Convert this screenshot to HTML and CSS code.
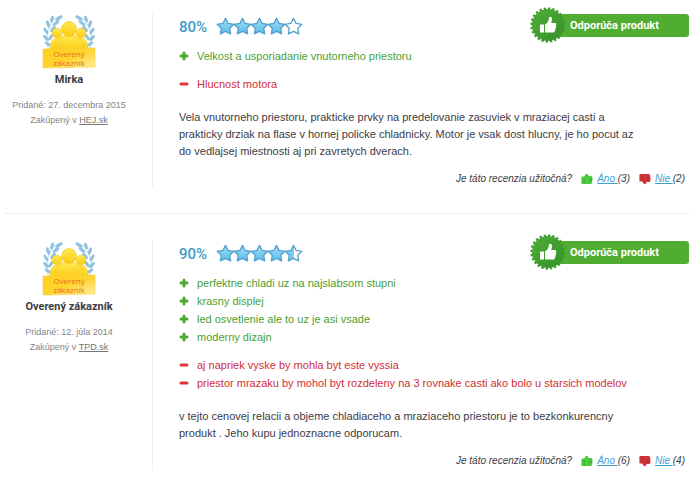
FILE: index.html
```html
<!DOCTYPE html>
<html lang="sk">
<head>
<meta charset="utf-8">
<title>Recenzie zákazníkov</title>
<link rel="stylesheet" href="styles.css">
</head>
<body>
<svg class="sprite" aria-hidden="true">
  <defs>
    <linearGradient id="gold" x1="0" y1="0" x2="0" y2="1">
      <stop offset="0" stop-color="#ffea50"/><stop offset="1" stop-color="#fbca14"/>
    </linearGradient>
    <linearGradient id="plate" x1="0" y1="0" x2="1" y2="1">
      <stop offset="0" stop-color="#ffcf1c"/><stop offset=".5" stop-color="#ffd42e"/><stop offset="1" stop-color="#fff0a0"/>
    </linearGradient>
    <linearGradient id="sky" x1="0" y1="0" x2="0" y2="1">
      <stop offset="0" stop-color="#a4ddf7"/><stop offset="1" stop-color="#58bdeb"/>
    </linearGradient>
    <linearGradient id="half" x1="0" y1="0" x2="1" y2="0">
      <stop offset=".5" stop-color="#7accf0"/><stop offset=".5" stop-color="#fff"/>
    </linearGradient>
    <linearGradient id="seal" x1="0" y1="0" x2="1" y2="1">
      <stop offset="0" stop-color="#4dae38"/><stop offset="1" stop-color="#35902a"/>
    </linearGradient>
    <path id="star-shape" d="M9 1.3 11.5 6.100 16.900 6.900 13 10.700 13.900 16 9 13.600 4.100 16 5 10.700 1.100 6.900 6.500 6.100Z" stroke="#4f9fcc" stroke-width="1.200" stroke-linejoin="round"/>
    <g id="laurel">
      <path d="M9 40C1 31 2 16 12 4" fill="none" stroke="#b5d9ea" stroke-width="1"/>
      <g fill="#8fc3e0">
        <ellipse cx="16" cy="4" rx="4.200" ry="1.700" transform="rotate(-32 16 4)"/>
        <ellipse cx="9" cy="5" rx="3.600" ry="1.600" transform="rotate(-75 9 5)"/>
        <ellipse cx="13" cy="9" rx="4" ry="1.700" transform="rotate(-38 13 9)"/>
        <ellipse cx="5" cy="10" rx="3.800" ry="1.700" transform="rotate(72 5 10)"/>
        <ellipse cx="10" cy="15" rx="3.800" ry="1.700" transform="rotate(-48 10 15)"/>
        <ellipse cx="3" cy="17" rx="3.800" ry="1.600" transform="rotate(58 3 17)"/>
        <ellipse cx="8" cy="23" rx="3.800" ry="1.600" transform="rotate(-55 8 23)"/>
        <ellipse cx="3" cy="24" rx="3.800" ry="1.600" transform="rotate(45 3 24)"/>
        <ellipse cx="5" cy="30" rx="3.800" ry="1.500" transform="rotate(32 5 30)"/>
      </g>
    </g>
    <g id="person"><circle r="4.800"/><path d="M-7 18C-7 8-4 5 0 5S7 8 7 18Z"/></g>
  </defs>
  <symbol id="verified" viewBox="0 0 54 56">
    <use href="#laurel" x="1" y="1"/>
    <use href="#laurel" transform="translate(53 1) scale(-1 1)"/>
    <g fill="url(#gold)" stroke="#f3c21a" stroke-width=".6">
      <use href="#person" x="15" y="20"/>
      <use href="#person" x="39" y="20"/>
      <path d="M12 38C12 27 17 22 27 22S42 27 42 38Z"/>
      <circle cx="27" cy="16" r="7.500"/>
    </g>
    <path d="M1 36 53 35 53 54 1 55Z" fill="url(#plate)" stroke="#f8cf3c" stroke-width=".6"/>
  </symbol>
  <symbol id="star" viewBox="0 0 18 18"><use href="#star-shape" fill="url(#sky)"/></symbol>
  <symbol id="star-half" viewBox="0 0 18 18"><use href="#star-shape" fill="url(#half)"/></symbol>
  <symbol id="star-empty" viewBox="0 0 18 18"><use href="#star-shape" fill="#fff"/></symbol>
  <symbol id="plus" viewBox="0 0 10 10"><path d="M5 2V8M2 5H8" stroke="#49ad33" stroke-width="3" stroke-linecap="round"/></symbol>
  <symbol id="minus" viewBox="0 0 10 10"><path d="M2 5H8" stroke="#e2333c" stroke-width="3" stroke-linecap="round"/></symbol>
  <symbol id="seal-thumb" viewBox="0 0 36 36">
    <circle cx="18" cy="18" r="16.500" fill="none" stroke="#3f9d2e" stroke-width="2.400" pathLength="96" stroke-dasharray="2.200 1.800"/>
    <circle cx="18" cy="18" r="16" fill="url(#seal)"/>
    <path d="M10 17.500H14V25.500H10ZM15 17.500C18 15.500 19 13 19 10.500 19.500 9.200 22 9.700 22 12 22 14 21.500 15 21 16H25C26.600 16 26.600 18.300 25.600 18.700 26.600 19.500 26.300 21 25.200 21.400 25.900 22.300 25.400 23.500 24.600 23.800 25 24.900 24.300 25.500 23.300 25.500H15Z" fill="#fff"/>
  </symbol>
  <symbol id="thumb" viewBox="0 0 12 12"><path d="M1 3.500H3L5 1Q7 0 7.500 3H10.500Q11.700 3.500 11.500 6L11 10Q10.500 11 9.500 11H1.200Q.4 11 .4 10V4.500Q.4 3.500 1 3.500Z"/><path d="M3.200 5V10.500M8 6H11M8 8H11" fill="none" stroke="#000" stroke-opacity=".15"/></symbol>
</svg>

<main class="reviews">
  <article class="review">
    <aside class="author">
      <div class="verified"><svg aria-hidden="true"><use href="#verified"/></svg><span>Overený<br>zákazník</span></div>
      <h2 class="name">Mirka</h2>
      <p class="meta">Pridané: 27. decembra 2015<br>Zakúpený v <a href="#hej">HEJ.sk</a></p>
    </aside>
    <div class="content">
      <header class="head">
        <strong class="score">80%</strong>
        <span class="stars" role="img" aria-label="4 z 5">
          <svg><use href="#star"/></svg><svg><use href="#star"/></svg><svg><use href="#star"/></svg><svg><use href="#star"/></svg><svg><use href="#star-empty"/></svg>
        </span>
        <div class="recommend"><svg><use href="#seal-thumb"/></svg><span>Odporúča produkt</span></div>
      </header>
      <ul class="points pros">
        <li><svg><use href="#plus"/></svg>Velkost a usporiadanie vnutorneho priestoru</li>
      </ul>
      <ul class="points cons">
        <li><svg><use href="#minus"/></svg>Hlucnost motora</li>
      </ul>
      <p class="text">Vela vnutorneho priestoru, prakticke prvky na predelovanie zasuviek v mraziacej casti a prakticky drziak na flase v hornej policke chladnicky. Motor je vsak dost hlucny, je ho pocut az do vedlajsej miestnosti aj pri zavretych dverach.</p>
      <footer class="useful">
        <span>Je táto recenzia užitočná?</span>
        <span class="vote yes"><svg><use href="#thumb"/></svg><span><a href="#yes">Áno </a>(3)</span></span>
        <span class="vote no"><svg><use href="#thumb"/></svg><span><a href="#no">Nie </a>(2)</span></span>
      </footer>
    </div>
  </article>

  <article class="review">
    <aside class="author">
      <div class="verified"><svg aria-hidden="true"><use href="#verified"/></svg><span>Overený<br>zákazník</span></div>
      <h2 class="name">Overený zákazník</h2>
      <p class="meta">Pridané: 12. júla 2014<br>Zakúpený v <a href="#tpd">TPD.sk</a></p>
    </aside>
    <div class="content">
      <header class="head">
        <strong class="score">90%</strong>
        <span class="stars" role="img" aria-label="4,5 z 5">
          <svg><use href="#star"/></svg><svg><use href="#star"/></svg><svg><use href="#star"/></svg><svg><use href="#star"/></svg><svg><use href="#star-half"/></svg>
        </span>
        <div class="recommend"><svg><use href="#seal-thumb"/></svg><span>Odporúča produkt</span></div>
      </header>
      <ul class="points pros">
        <li><svg><use href="#plus"/></svg>perfektne chladi uz na najslabsom stupni</li>
        <li><svg><use href="#plus"/></svg>krasny displej</li>
        <li><svg><use href="#plus"/></svg>led osvetlenie ale to uz je asi vsade</li>
        <li><svg><use href="#plus"/></svg>moderny dizajn</li>
      </ul>
      <ul class="points cons">
        <li><svg><use href="#minus"/></svg>aj napriek vyske by mohla byt este vyssia</li>
        <li><svg><use href="#minus"/></svg>priestor mrazaku by mohol byt rozdeleny na 3 rovnake casti ako bolo u starsich modelov</li>
      </ul>
      <p class="text">v tejto cenovej relacii a objeme chladiaceho a mraziaceho priestoru je to bezkonkurencny produkt . Jeho kupu jednoznacne odporucam.</p>
      <footer class="useful">
        <span>Je táto recenzia užitočná?</span>
        <span class="vote yes"><svg><use href="#thumb"/></svg><span><a href="#yes">Áno </a>(6)</span></span>
        <span class="vote no"><svg><use href="#thumb"/></svg><span><a href="#no">Nie </a>(4)</span></span>
      </footer>
    </div>
  </article>
</main>
</body>
</html>
```
FILE: styles.css
```css
* { box-sizing: border-box; }
body {
  margin: 0;
  background: #fff;
  color: #3c3c44;
  font: 11px/17px "Liberation Sans", Arial, sans-serif;
}
h2, p, ul { margin: 0; padding: 0; }
svg { display: block; flex: none; }
.sprite { position: absolute; width: 0; height: 0; }

.reviews { padding: 0 10px 0 4px; }
.review {
  display: grid;
  grid-template-columns: 148px 1fr;
  padding: 13px 0 25px;
}
.review + .review { border-top: 1px solid #eee; padding-top: 26px; }

.author {
  display: flex;
  flex-direction: column;
  align-items: center;
  padding-right: 18px;
  text-align: center;
}
.verified { position: relative; margin-bottom: 2px; }
.verified svg { width: 54px; height: 56px; }
.verified span {
  position: absolute;
  inset: auto 0 2px;
  font: 8px/9px "Open Sans", sans-serif;
  color: #e2701a;
}
.name { font: bold 11px/17px Roboto, sans-serif; margin-bottom: 10px; }
.meta { font-size: 9px; line-height: 15px; color: #858585; }
.meta a { color: #777; }

.content { border-left: 1px solid #f0f0f0; padding-left: 26px; }
.head { display: flex; align-items: center; height: 24px; margin-bottom: 10px; }
.score { width: 37px; padding-top: 4px; font: 500 15px/24px Roboto, sans-serif; color: #3d9acb; }
.stars { display: flex; padding-top: 3px; }
.stars svg { width: 19px; height: 19px; margin-right: -2px; }
.recommend {
  display: flex;
  align-items: center;
  width: 150px;
  height: 23px;
  margin: 0 1px 0 auto;
  padding-right: 8px;
  border-radius: 3px;
  background: linear-gradient(to right, transparent 18px, #50ad31 18px);
  color: #fff;
  font: bold 11px/17px Roboto, sans-serif;
}
.recommend svg { width: 36px; height: 36px; margin: 0 4px 0 -9px; }

.points { list-style: none; margin-bottom: 10px; line-height: 18px; }
.points li { display: flex; align-items: center; gap: 8px; }
.points svg { width: 10px; height: 10px; }
.pros { color: #4a9f33; }
.cons { color: #cf2f36; margin-bottom: 16px; }
.text { padding-right: 46px; }

.useful {
  display: flex;
  justify-content: flex-end;
  align-items: center;
  gap: 9px;
  margin-top: 10px;
  padding-right: 5px;
  font-size: 10px;
  line-height: 18px;
  font-style: italic;
}
.vote { display: flex; align-items: center; gap: 4px; }
.vote svg { width: 12px; height: 12px; }
.vote a { color: #3c9fd6; white-space: pre; }
.yes svg { fill: #4ccb3c; }
.no svg { fill: #cf3539; transform: scaleY(-1); }
```
